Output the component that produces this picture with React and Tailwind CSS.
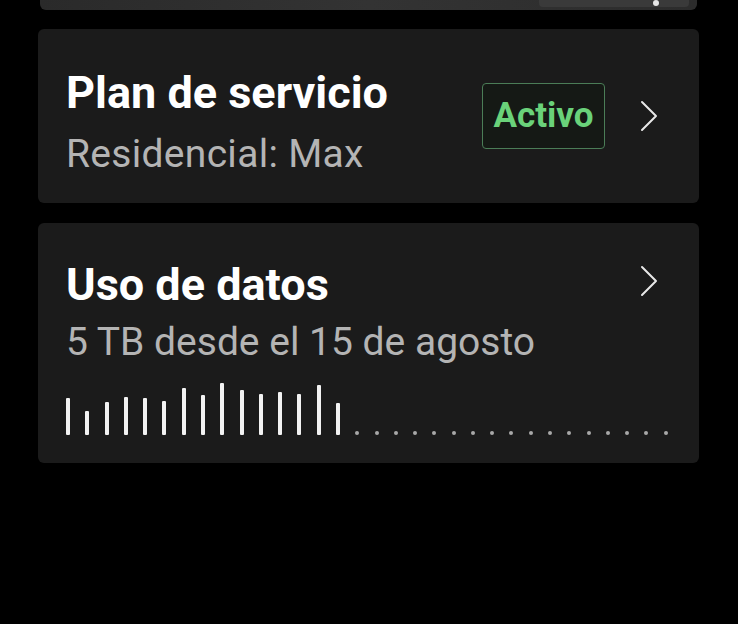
import React from "react";

const bars = [37, 24, 33, 38, 37, 34, 47, 40, 52, 45, 41, 43, 41, 50, 32];
const dots = 17;

function Chevron() {
  return (
    <svg width="18" height="32" viewBox="0 0 18 32" className="shrink-0">
      <polyline points="2,2 16,16 2,30" fill="none" stroke="#e8e8e8" strokeWidth="2" strokeLinecap="round" strokeLinejoin="round" />
    </svg>
  );
}

export default function App() {
  return (
    <div className="min-h-[624px] bg-black pl-[38px] pr-[39px] font-[Roboto,sans-serif]">
      {/* tarjeta cortada arriba */}
      <div className="mx-[2px] h-[10px] rounded-b-md bg-gradient-to-r from-[#2a2a2a] via-[#333333] to-[#2c2c2c] flex items-start justify-end pr-[8px]">
        <div className="h-[7px] w-[150px] rounded-b-sm bg-[#3a3a3a] flex items-start justify-end pr-[30px]">
          <div className="h-[6px] w-[6px] rounded-full bg-[#e6e6e6]" />
        </div>
      </div>

      {/* Plan de servicio */}
      <div className="mt-[19px] h-[174px] rounded-md bg-[#1b1b1b] pl-[28px] pr-[30px] flex items-center justify-between">
        <div className="flex flex-col pt-[37px] pb-[26px]">
          <div className="text-[45px] leading-[52px] font-bold text-white">Plan de servicio</div>
          <div className="mt-[13px] text-[39px] leading-[44px] tracking-[0.3px] text-[#b4b4b4]">Residencial: Max</div>
        </div>
        <div className="flex items-center gap-[35px] mr-[11px]">
          <div className="w-[123px] h-[66px] rounded-[4px] border-[1.5px] border-[#4b7d57] bg-[#151915] flex items-center justify-center text-[35px] font-bold text-[#6ad27a]">
            Activo
          </div>
          <Chevron />
        </div>
      </div>

      {/* Uso de datos */}
      <div className="mt-[20px] h-[240px] rounded-md bg-[#1b1b1b] pl-[28px] pr-[30px] pt-[36px]">
        <div className="flex items-center justify-between h-[52px]">
          <div className="text-[45px] leading-[52px] font-bold text-white">Uso de datos</div>
          <div className="mr-[11px] -mt-[8px]">
            <Chevron />
          </div>
        </div>
        <div className="mt-[9px] text-[39px] leading-[44px] text-[#b4b4b4]">5 TB desde el 15 de agosto</div>
        <div className="mt-[19px] h-[52px] w-[602px] flex items-end justify-between">
          {bars.map((h, i) => (
            <div key={"b" + i} className="w-[4px] rounded-[1px] bg-[#f2f2f2]" style={{ height: h }} />
          ))}
          {Array.from({ length: dots }).map((_, i) => (
            <div key={"d" + i} className="w-[4px] h-[4px] rounded-full bg-[#a8a8a8]" />
          ))}
        </div>
      </div>
    </div>
  );
}
